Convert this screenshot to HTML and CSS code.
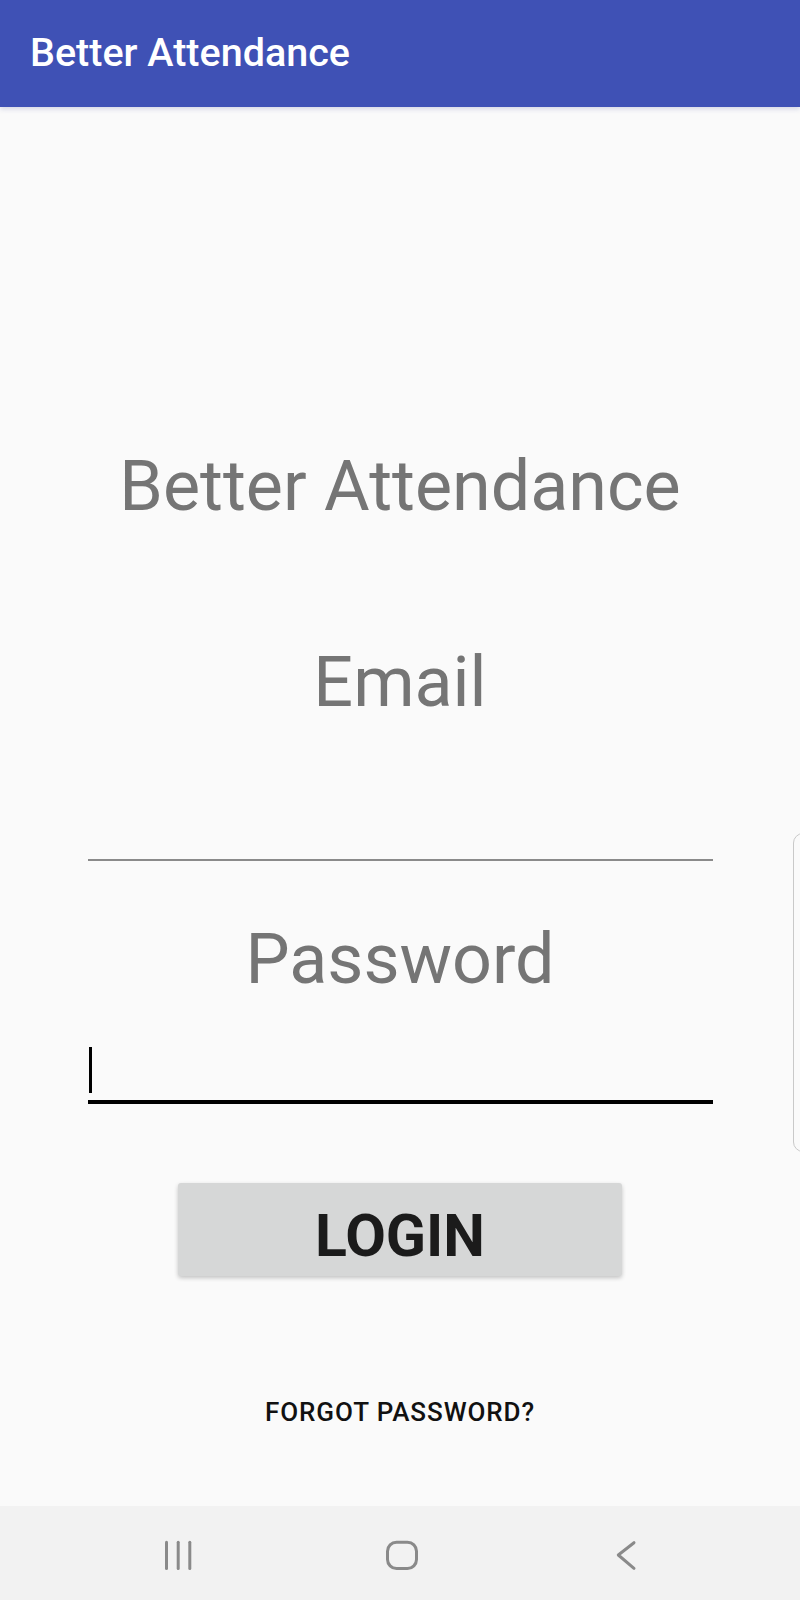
FILE: index.html
```html
<!DOCTYPE html>
<html lang="en">
<head>
<meta charset="utf-8">
<title>Better Attendance</title>
<link rel="stylesheet" href="styles.css">
</head>
<body>
<div class="screen">
  <header class="appbar">Better Attendance</header>
  <main class="content">
    <h1 class="heading">Better Attendance</h1>
    <div class="label">Email</div>
    <div class="field field-email"></div>
    <div class="label label-password">Password</div>
    <div class="field field-password"><span class="cursor"></span></div>
    <button class="login">LOGIN</button>
    <a class="forgot">FORGOT PASSWORD?</a>
  </main>
  <nav class="navbar">
    <span class="navslot">
      <svg width="40" height="34" viewBox="0 0 40 34"><g stroke="#8a8a8a" stroke-width="3" stroke-linecap="round"><line x1="8.5" y1="4.2" x2="8.5" y2="30.5"/><line x1="20.2" y1="4.2" x2="20.2" y2="30.5"/><line x1="31.8" y1="4.2" x2="31.8" y2="30.5"/></g></svg>
    </span>
    <span class="navslot">
      <svg width="40" height="34" viewBox="0 0 40 34"><rect x="5.5" y="4.2" width="29" height="26.3" rx="9" fill="none" stroke="#8a8a8a" stroke-width="3"/></svg>
    </span>
    <span class="navslot">
      <svg width="40" height="34" viewBox="0 0 40 34"><polyline points="28,4.7 12.3,17 28,30.3" fill="none" stroke="#8a8a8a" stroke-width="3" stroke-linecap="round" stroke-linejoin="round"/></svg>
    </span>
  </nav>
  <div class="edge-handle"></div>
</div>
</body>
</html>
```

FILE: styles.css
```css
* { box-sizing: border-box; }
html, body { margin: 0; padding: 0; }
body {
  background: #fafafa;
  font-family: Roboto, "Liberation Sans", sans-serif;
}
.screen {
  position: relative;
  height: 1600px;
  display: flex;
  flex-direction: column;
  overflow: hidden;
}
.appbar {
  height: 107px;
  flex: none;
  background: #3f51b5;
  color: #ffffff;
  font-size: 39.5px;
  font-weight: 500;
  line-height: 44px;
  padding: 31px 0 0 30px;
  box-shadow: 0 2px 5px rgba(40, 50, 140, 0.18);
  position: relative;
  z-index: 1;
}
.content {
  flex: 1;
  display: flex;
  flex-direction: column;
  align-items: center;
  padding-top: 337px;
}
.heading, .label {
  margin: 0;
  font-size: 70px;
  font-weight: 400;
  line-height: 84px;
  color: #757575;
  text-align: center;
}
.label { margin-top: 112px; }
.label-password { margin-top: 56px; }
.field {
  width: 625px;
}
.field-email {
  height: 137px;
  border-bottom: 2px solid #8a8a8a;
}
.field-password {
  height: 103px;
  border-bottom: 4px solid #000000;
  display: flex;
  align-items: flex-end;
  padding-bottom: 7px;
}
.cursor {
  display: block;
  width: 3px;
  height: 46px;
  margin-left: 1px;
  background: #000000;
}
.login {
  margin-top: 79px;
  width: 444px;
  height: 93px;
  border: none;
  border-radius: 3px;
  background: #d6d7d7;
  color: #1b1b1b;
  font-family: Roboto, "Liberation Sans", sans-serif;
  font-size: 59px;
  font-weight: 700;
  line-height: 77px;
  padding: 11px 0 0 0;
  vertical-align: top;
  box-shadow: 0 2px 4px rgba(0, 0, 0, 0.22);
}
.forgot {
  margin-top: 121px;
  font-size: 26px;
  font-weight: 500;
  line-height: 30px;
  letter-spacing: 0.9px;
  color: #111111;
}
.navbar {
  height: 94px;
  flex: none;
  background: #f2f2f2;
  display: flex;
  align-items: flex-start;
  padding: 32px 0 0 158px;
  gap: 184px;
}
.navslot {
  display: block;
  width: 40px;
  height: 34px;
}
.navslot svg { display: block; }
.edge-handle {
  position: absolute;
  left: 793px;
  top: 833px;
  width: 30px;
  height: 319px;
  border: 1px solid #c9c9c9;
  border-radius: 10px;
  background: #fafafa;
}
```
